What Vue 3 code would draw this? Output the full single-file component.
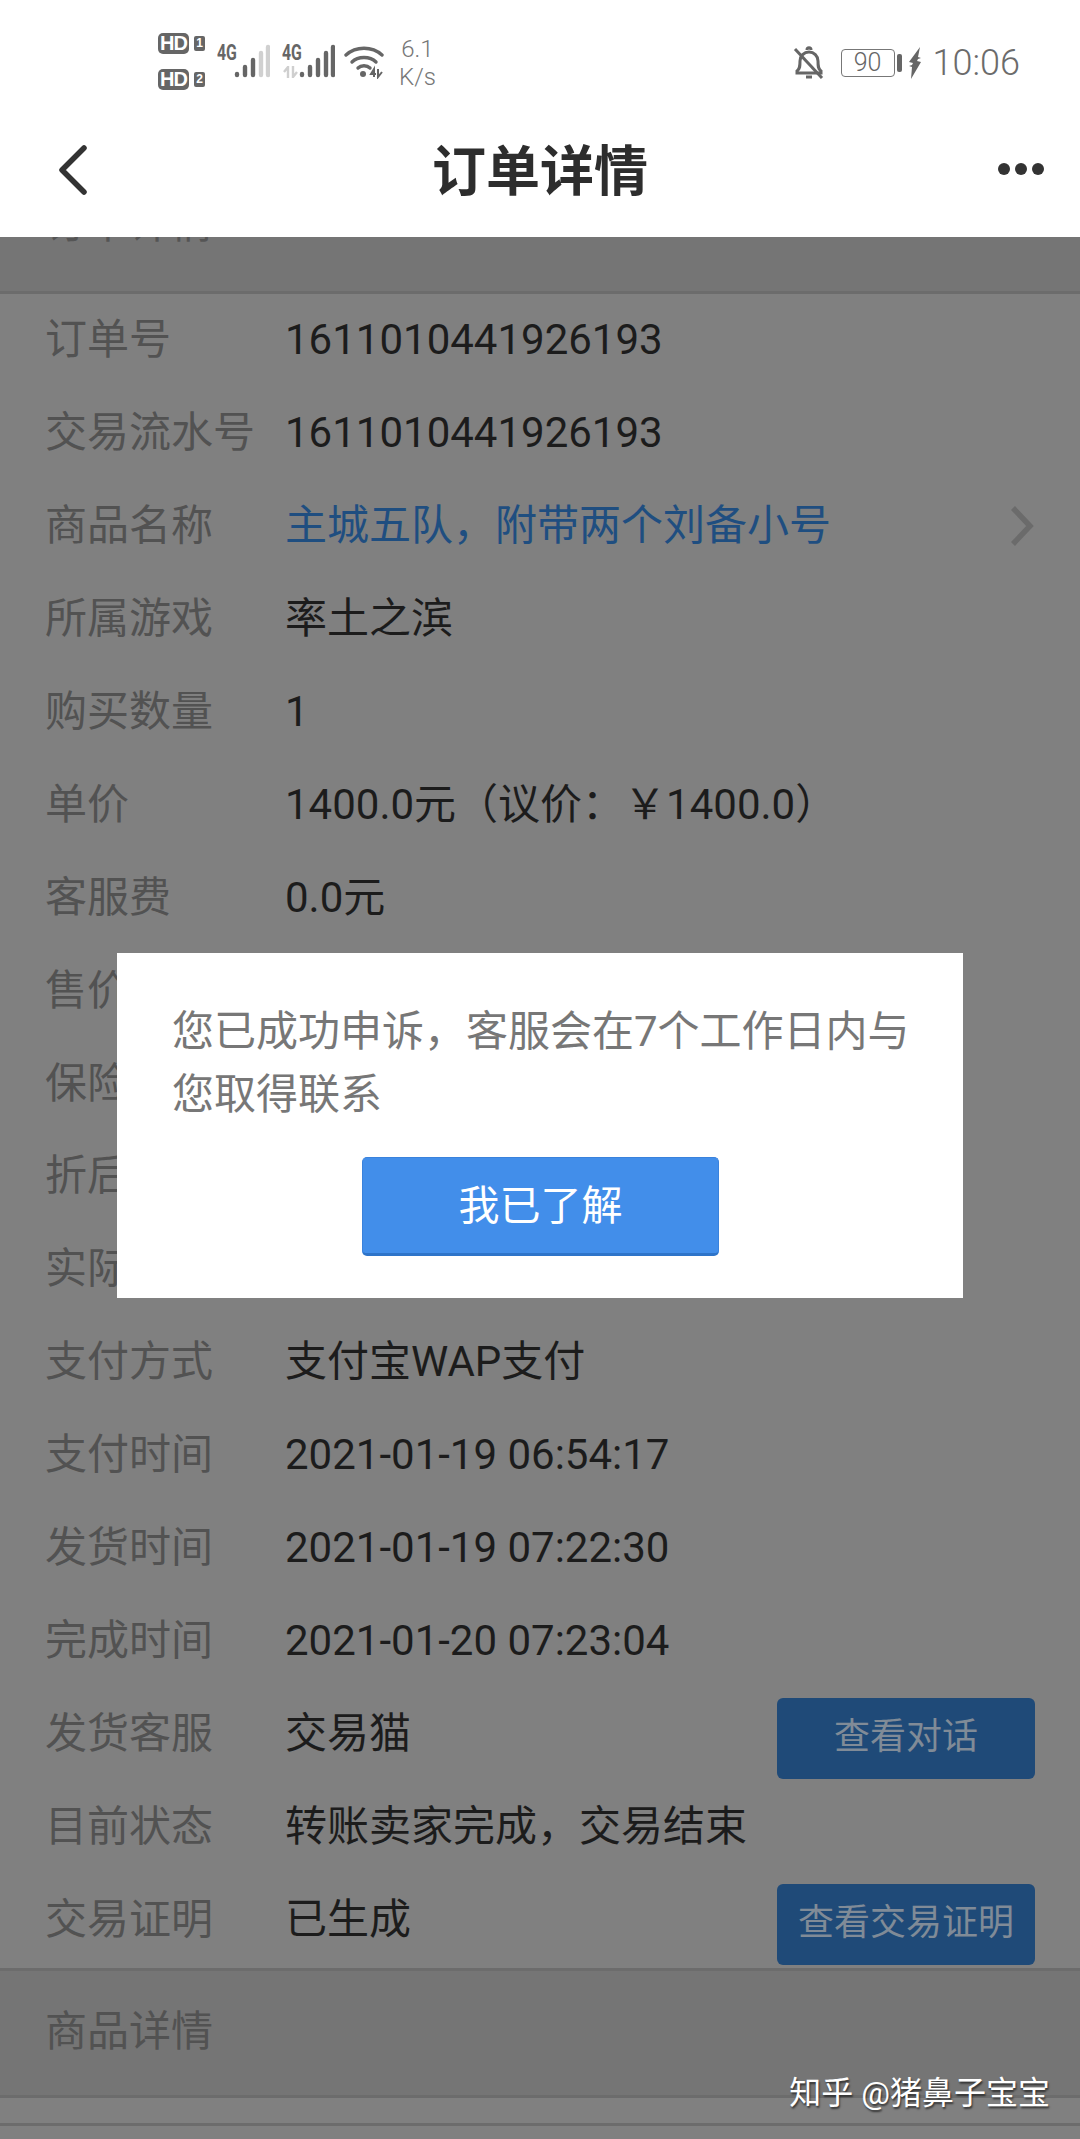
<script setup>
const rows = [
  { label: '订单号', value: '1611010441926193' },
  { label: '交易流水号', value: '1611010441926193' },
  { label: '商品名称', value: '主城五队，附带两个刘备小号', link: true },
  { label: '所属游戏', value: '率土之滨' },
  { label: '购买数量', value: '1' },
  { label: '单价', value: '1400.0元（议价：￥1400.0）' },
  { label: '客服费', value: '0.0元' },
  { label: '售价', value: '' },
  { label: '保险', value: '' },
  { label: '折后', value: '' },
  { label: '实际', value: '' },
  { label: '支付方式', value: '支付宝WAP支付' },
  { label: '支付时间', value: '2021-01-19 06:54:17' },
  { label: '发货时间', value: '2021-01-19 07:22:30' },
  { label: '完成时间', value: '2021-01-20 07:23:04' },
  { label: '发货客服', value: '交易猫', action: '查看对话' },
  { label: '目前状态', value: '转账卖家完成，交易结束' },
  { label: '交易证明', value: '已生成', action: '查看交易证明' }
]
</script>

<template>
  <div class="page">
    <header class="top">
      <div class="status-bar">
        <div class="status-left">
          <div class="hd-group">
            <div class="hd-line"><span class="hd">HD</span><span class="sim">1</span></div>
            <div class="hd-line"><span class="hd">HD</span><span class="sim">2</span></div>
          </div>
          <div class="signal">
            <span class="net">4G</span>
            <svg width="36" height="34" viewBox="0 0 36 34">
              <g stroke-linecap="round" stroke-width="4.4">
                <path d="M3 30v1" stroke="#666" />
                <path d="M11 23v8" stroke="#666" />
                <path d="M19 16v15" stroke="#666" />
                <path d="M27 9v22" stroke="#d0d0d0" />
                <path d="M34 3v28" stroke="#d0d0d0" />
              </g>
            </svg>
          </div>
          <div class="signal">
            <span class="net">4G</span>
            <svg class="arrows" width="16" height="12" viewBox="0 0 16 12" fill="none" stroke="#cfcfcf" stroke-width="2.4">
              <path d="M5 12V1L1 6" />
              <path d="M10 0v11l4-5" />
            </svg>
            <svg width="36" height="34" viewBox="0 0 36 34">
              <g stroke="#666" stroke-linecap="round" stroke-width="4.4">
                <path d="M3 30v1" />
                <path d="M11 23v8" />
                <path d="M19 16v15" />
                <path d="M27 9v22" />
                <path d="M34 3v28" />
              </g>
            </svg>
          </div>
          <svg class="wifi" width="40" height="34" viewBox="0 0 40 34" fill="none">
            <path d="M2 10C12 1 28 1 38 10" stroke="#666" stroke-width="3.4" stroke-linecap="round" />
            <path d="M8 17C14 11 26 11 32 17" stroke="#666" stroke-width="3.4" stroke-linecap="round" />
            <path d="M14 23C17 20 23 20 26 23" stroke="#666" stroke-width="3.4" stroke-linecap="round" />
            <circle cx="19" cy="29" r="3" fill="#666" />
            <path d="M30 32V24l-3 5h5M34 24v8l4-5" stroke="#666" stroke-width="2" />
          </svg>
          <div class="speed"><span>6.1</span><span>K/s</span></div>
        </div>
        <div class="status-right">
          <svg class="bell" width="32" height="34" viewBox="0 0 32 34" fill="none" stroke="#666" stroke-width="3">
            <path d="M4 25c3-2 3-5 3-10 0-5 4-9 9-9s9 4 9 9c0 5 0 8 3 10v2H4z" />
            <path d="M13 31h6" />
            <path d="M14 4c0-3 4-3 4 0" />
            <path d="M2 3l27 29" />
          </svg>
          <span class="battery"><span class="battery-num">90</span></span>
          <span class="battery-cap"></span>
          <svg class="bolt" width="14" height="32" viewBox="0 0 14 32">
            <path d="M12 0L1 15l4 1-1 2-3 1 3 1-1 12L13 15l-4-1 1-2 3-1-3-1z" fill="#666" />
          </svg>
          <span class="clock">10:06</span>
        </div>
      </div>
      <div class="nav">
        <svg class="back" width="30" height="50" viewBox="0 0 30 50" fill="none">
          <path d="M26 3L4 25l22 22" stroke="#333" stroke-width="5.5" stroke-linecap="round" stroke-linejoin="round" />
        </svg>
        <h1 class="title">订单详情</h1>
        <div class="more"><i></i><i></i><i></i></div>
      </div>
    </header>

    <div class="content">
      <div class="section-head"><span class="section-cut">订单详情</span></div>
      <div class="rows">
        <div v-for="row in rows" :key="row.label" class="row">
          <span class="label">{{ row.label }}</span>
          <span class="value" :class="{ link: row.link }">{{ row.value }}</span>
          <span v-if="row.action" class="action">{{ row.action }}</span>
          <svg v-if="row.link" class="chevron" width="26" height="40" viewBox="0 0 26 40" fill="none">
            <path d="M4 2l17 18L4 38" stroke="#6b6b6b" stroke-width="5.5" />
          </svg>
        </div>
      </div>
      <div class="detail-head">商品详情</div>
      <div class="gap"></div>
    </div>

    <div class="modal">
      <p class="modal-text">您已成功申诉，客服会在7个工作日内与您取得联系</p>
      <button class="modal-btn">我已了解</button>
    </div>

    <div class="watermark">知乎 @猪鼻子宝宝</div>
  </div>
</template>

<style scoped>
.page {
  position: relative;
  width: 1080px;
  height: 2139px;
  overflow: hidden;
  background: #808080;
  font-family: Roboto, "Noto Sans CJK SC", sans-serif;
}

.top {
  position: relative;
  z-index: 2;
  height: 237px;
  background: #fff;
}

.status-bar {
  display: flex;
  justify-content: space-between;
  height: 120px;
  padding: 29px 60px 0 158px;
  box-sizing: border-box;
}

.status-left {
  display: flex;
  align-items: center;
  height: 64px;
}

.hd-group {
  display: flex;
  flex-direction: column;
  gap: 15px;
}

.hd-line {
  display: flex;
  align-items: center;
  gap: 5px;
  height: 21px;
}

.hd {
  width: 31px;
  height: 21px;
  border-radius: 5px;
  background: #666;
  color: #fff;
  font: 700 20px/21px "Liberation Sans", sans-serif;
  letter-spacing: -1px;
  text-align: center;
}

.sim {
  width: 11px;
  height: 15px;
  border-radius: 2px;
  background: #666;
  color: #fff;
  font: 700 12px/15px "Liberation Sans", sans-serif;
  text-align: center;
}

.signal {
  position: relative;
  display: flex;
  align-items: flex-end;
  height: 34px;
  margin-left: 12px;
}

.net {
  align-self: flex-start;
  width: 17px;
  color: #666;
  font: 700 22px/18px Roboto, sans-serif;
  transform: scaleX(0.72);
  transform-origin: left;
  white-space: nowrap;
}

.arrows {
  position: absolute;
  left: 1px;
  bottom: 0;
}

.wifi {
  margin-left: 9px;
  margin-top: 2px;
}

.speed {
  display: flex;
  flex-direction: column;
  align-items: center;
  margin-left: 15px;
  margin-top: 4px;
  color: #777;
  font: 300 24px/28px Roboto, sans-serif;
}

.status-right {
  display: flex;
  align-items: center;
  height: 64px;
  padding-top: 3px;
  box-sizing: border-box;
  color: #666;
}

.bell {
  margin-right: 16px;
}

.battery {
  display: flex;
  align-items: center;
  justify-content: center;
  width: 54px;
  height: 28px;
  border: 1.5px solid #777;
  border-radius: 4px;
  box-sizing: border-box;
}

.battery-num {
  color: #666;
  font: 300 25px/28px Roboto, sans-serif;
}

.battery-cap {
  width: 5px;
  height: 18px;
  margin: 0 6px 0 2px;
  border-radius: 2px;
  background: #666;
}

.bolt {
  margin-right: 11px;
}

.clock {
  color: #6b6b6b;
  font: 300 36px/1 Roboto, sans-serif;
}

.nav {
  position: relative;
  display: flex;
  justify-content: center;
  height: 117px;
  padding-top: 18px;
  box-sizing: border-box;
}

.back {
  position: absolute;
  left: 58px;
  top: 25px;
}

.title {
  margin: 0;
  color: #2d2d2d;
  font-size: 54px;
  font-weight: 700;
  line-height: 70px;
}

.more {
  position: absolute;
  right: 36px;
  top: 43px;
  display: flex;
  gap: 5px;
}

.more i {
  width: 12px;
  height: 12px;
  border-radius: 50%;
  background: #333;
}

.section-head {
  height: 54px;
  overflow: hidden;
  background: #757575;
  border-bottom: 3px solid #6c6c6c;
}

.section-cut {
  display: block;
  margin: -38px 0 0 45px;
  color: #555;
  font-size: 42px;
  line-height: 50px;
}

.row {
  display: flex;
  align-items: center;
  height: 92.9px;
  padding: 0 45px;
  font-size: 42px;
  line-height: 50px;
}

.label {
  flex: 0 0 240px;
  color: #525252;
  white-space: nowrap;
}

.value {
  flex: 1;
  color: #1c1c1c;
}

.value.link {
  color: #1f4e80;
}

.action {
  flex: 0 0 258px;
  height: 81px;
  margin-top: 9px;
  border-radius: 6px;
  background: #1f4a78;
  color: #808b97;
  font-size: 36px;
  line-height: 79px;
  text-align: center;
}

.detail-head {
  height: 124px;
  margin-top: 2px;
  padding: 0 45px;
  background: #757575;
  border-top: 3px solid #6c6c6c;
  border-bottom: 3px solid #6c6c6c;
  color: #525252;
  font-size: 42px;
  line-height: 122px;
}

.gap {
  height: 25px;
  border-bottom: 3px solid #6c6c6c;
}

.modal {
  position: absolute;
  left: 117px;
  top: 953px;
  z-index: 3;
  width: 846px;
  height: 345px;
  padding: 47px 49px 0 55px;
  box-sizing: border-box;
  background: #fff;
}

.modal-text {
  margin: 0;
  color: #777;
  font-size: 42px;
  line-height: 63px;
}

.modal-btn {
  display: block;
  width: 357px;
  height: 99px;
  margin: 31px 0 0 190px;
  border: 1px solid #3a82dc;
  border-bottom: 3px solid #2e74c9;
  border-radius: 5px;
  background: #428eea;
  color: #fff;
  font-family: inherit;
  font-size: 41px;
  line-height: 50px;
}

.watermark {
  position: absolute;
  right: 30px;
  bottom: 26px;
  z-index: 4;
  color: #fff;
  font-size: 32px;
  line-height: 40px;
  text-shadow: 1px 2px 2px rgba(0, 0, 0, 0.6);
}
</style>
